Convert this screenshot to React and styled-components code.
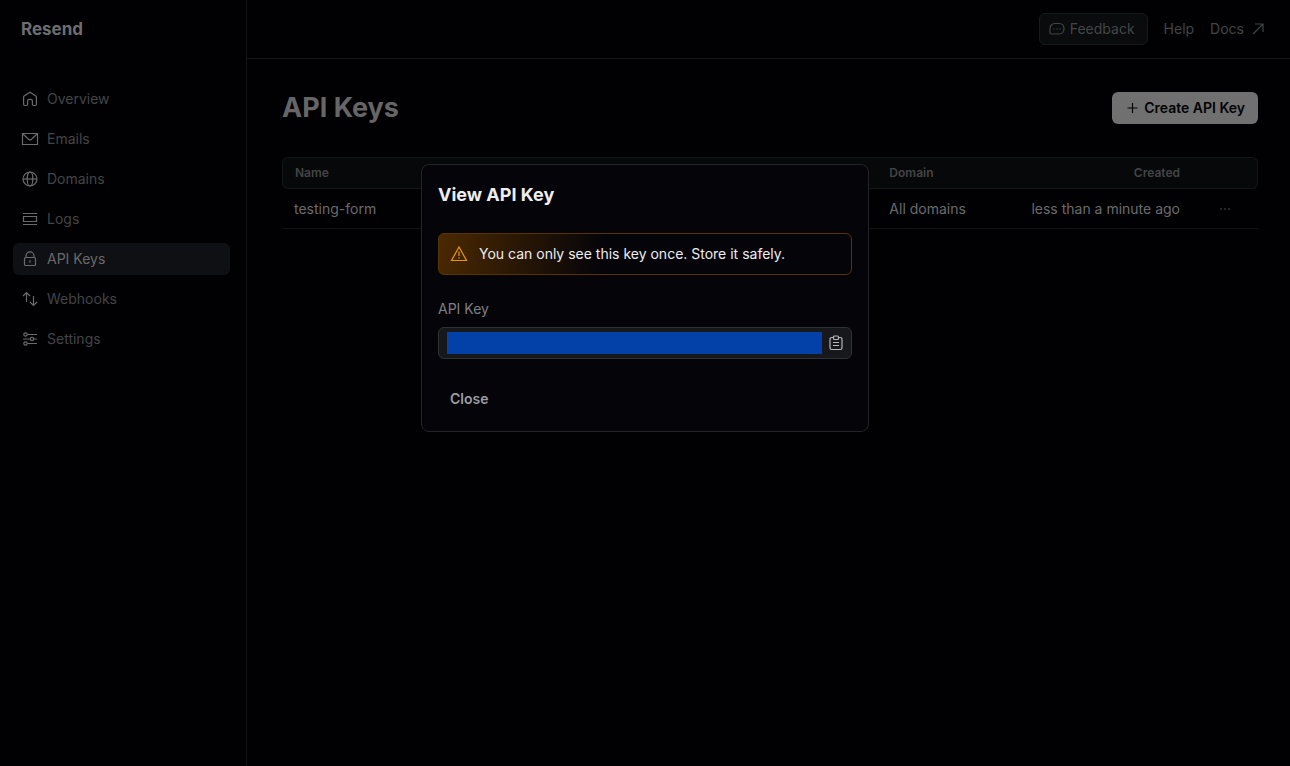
import React from 'react';
import styled, { createGlobalStyle } from 'styled-components';

const GlobalStyle = createGlobalStyle`
  *, *::before, *::after { box-sizing: border-box; }
  body {
    margin: 0;
    background: #010103;
    color: #6a6b6c;
    font: 400 14px/20px Inter, "Liberation Sans", sans-serif;
  }
  button, input { font: inherit; }
  a { color: inherit; text-decoration: none; }
`;

const Page = styled.div`
  display: flex;
  min-height: 100vh;
`;

const Sidebar = styled.aside`
  flex: none;
  width: 247px;
  border-right: 1px solid #131416;
`;

const Logo = styled.a`
  display: flex;
  align-items: center;
  height: 58px;
  padding-left: 21px;
  color: #6e6e6f;
  font-weight: 700;
  font-size: 17px;
  line-height: 24px;
`;

const Nav = styled.nav`
  display: grid;
  gap: 8px;
  padding: 25px 16px 0 13px;
`;

const NavLink = styled.a`
  display: flex;
  align-items: center;
  gap: 8px;
  height: 32px;
  padding: 0 8px;
  border-radius: 6px;
  background: ${(p) => (p.$active ? '#0f1013' : 'transparent')};
  color: ${(p) => (p.$active ? '#69696a' : '#434546')};

  svg { color: #6b6b6c; }
`;

const Icon = styled.svg.attrs({
  fill: 'none',
  stroke: 'currentColor',
  viewBox: '0 0 18 18',
  'aria-hidden': true,
})`
  flex: none;
  width: 18px;
  height: 18px;
  stroke-width: 1.2;
`;

const Main = styled.main`
  flex: 1;
  min-width: 0;
`;

const TopBar = styled.header`
  display: flex;
  align-items: center;
  justify-content: flex-end;
  gap: 16px;
  height: 59px;
  padding-right: 23px;
  border-bottom: 1px solid #131416;
  color: #434546;
`;

const FeedbackButton = styled.button`
  display: flex;
  align-items: center;
  gap: 4px;
  height: 32px;
  padding: 0 12px 0 8px;
  border: 1px solid #17191b;
  border-radius: 6px;
  background: #090b0d;
  color: inherit;
`;

const TopLink = styled.a`
  display: flex;
  align-items: center;
  gap: 5px;
`;

const Content = styled.div`
  padding: 33px 32px 32px 35px;
`;

const TitleRow = styled.div`
  display: flex;
  align-items: center;
  justify-content: space-between;
  margin-bottom: 33px;
`;

const Title = styled.h1`
  margin: 0;
  color: #666667;
  font-weight: 700;
  font-size: 27px;
  line-height: 32px;
`;

const CreateButton = styled.button`
  display: flex;
  align-items: center;
  gap: 3px;
  height: 32px;
  padding: 0 13px 0 11px;
  border: 0;
  border-radius: 6px;
  background: #707070;
  color: #020203;
  font-weight: 600;
`;

const Table = styled.table`
  width: 100%;
  table-layout: fixed;
  border-spacing: 0;
`;

const Head = styled.th`
  width: ${(p) => p.$width};
  height: 32px;
  padding: 0 12px;
  border: 1px solid #131517;
  border-width: 1px 0;
  background: #070809;
  color: #434546;
  font-weight: 600;
  font-size: 12px;
  line-height: 16px;
  text-align: ${(p) => p.$align || 'left'};

  &:first-child { border-left-width: 1px; border-radius: 6px 0 0 6px; }
  &:last-child { border-right-width: 1px; border-radius: 0 6px 6px 0; }
`;

const Cell = styled.td`
  height: 40px;
  padding: 0 12px;
  border-bottom: 1px solid #101214;
  text-align: ${(p) => p.$align || 'left'};
  white-space: nowrap;
`;

const MoreButton = styled.button`
  display: flex;
  margin-left: 12px;
  padding: 0;
  border: 0;
  background: none;
  color: #4b4c4e;
`;

const Overlay = styled.div`
  position: fixed;
  inset: 0;
  display: flex;
  align-items: flex-start;
  justify-content: center;
  padding: 164px 16px 16px;
`;

const Dialog = styled.section`
  width: 100%;
  max-width: 448px;
  padding: 16px;
  border: 1px solid #222428;
  border-radius: 8px;
  background: #050409;
`;

const DialogTitle = styled.h2`
  margin: 0 0 24px;
  color: #edeeef;
  font-weight: 700;
  font-size: 18px;
  line-height: 28px;
`;

const DialogBody = styled.div`
  display: grid;
  gap: 24px;
`;

const Alert = styled.div`
  display: flex;
  align-items: center;
  gap: 11px;
  height: 42px;
  padding: 0 11px;
  border: 1px solid #573401;
  border-radius: 6px;
  background: linear-gradient(98deg, #4b2900 0%, rgba(75, 41, 0, 0) 40%);
  color: #edeeef;

  svg { color: #e9960f; }
`;

const Field = styled.div`
  display: grid;
  gap: 8px;
`;

const Label = styled.label`
  color: #7d8085;
`;

const KeyBox = styled.div`
  display: flex;
  align-items: center;
  gap: 5px;
  height: 32px;
  padding: 0 6px 0 8px;
  border: 1px solid #2e3135;
  border-radius: 6px;
  background: #17181c;
`;

const KeyInput = styled.input`
  flex: 1;
  min-width: 0;
  height: 22px;
  padding: 0;
  border: 0;
  outline: 0;
  background: #0341a8;
`;

const CopyButton = styled.button`
  display: flex;
  padding: 0;
  border: 0;
  background: none;
  color: #b3b5b8;
`;

const CloseButton = styled.button`
  justify-self: start;
  height: 32px;
  padding: 0 12px;
  border: 0;
  border-radius: 6px;
  background: none;
  color: #9c9da1;
  font-weight: 600;
`;

const navItems = [
  { label: 'Overview', icon: <path d="M2.6 7.1c0-.5.2-.9.6-1.2L9 2.3l5.8 3.6c.4.3.6.7.6 1.2v7.2c0 .7-.5 1.2-1.2 1.2h-1.6c-.7 0-1.2-.5-1.2-1.2V11c0-.9-.7-1.6-1.6-1.6H8.200c-.9 0-1.6.7-1.6 1.6v3.3c0 .7-.5 1.2-1.2 1.2H3.8c-.7 0-1.200-.5-1.200-1.200z" /> },
  { label: 'Emails', icon: <path d="M1.5 3.500h15v11h-15zM2 4l5.500 5.200c.9.8 2.100.8 3 0L16 4" /> },
  { label: 'Domains', icon: <><circle cx="9" cy="9" r="7" /><ellipse cx="9" cy="9" rx="2.8" ry="7" /><path d="M2 9h14" /></> },
  { label: 'Logs', icon: <path d="M2 3.5h14M2 14.5h14M2.5 6.5h13v5h-13z" /> },
  { label: 'API Keys', active: true, icon: <><rect x="3.5" y="7.5" width="11" height="8" rx="1.3" /><path d="M5 7.5V5.900a4 4 0 0 1 8 0v1.600M9 10.300v2.500" /></> },
  { label: 'Webhooks', icon: <path d="M5.500 12V3M2 6l3.500-3.500L9 6M12.500 6v9M9 12l3.500 3.500L16 12" /> },
  { label: 'Settings', icon: <><circle cx="4.5" cy="4.5" r="1.7" /><circle cx="11" cy="9" r="1.7" /><circle cx="4.5" cy="13.5" r="1.7" /><path d="M6.200 4.500H16M2 9h7.300M12.700 9H16M6.200 13.500H16" /></> },
];

export default function App() {
  return (
    <>
      <GlobalStyle />
      <Page>
        <Sidebar>
          <Logo href="#">Resend</Logo>
          <Nav aria-label="Main">
            {navItems.map((item) => (
              <NavLink href="#" key={item.label} $active={item.active} aria-current={item.active ? 'page' : undefined}>
                <Icon>{item.icon}</Icon>
                {item.label}
              </NavLink>
            ))}
          </Nav>
        </Sidebar>
        <Main>
          <TopBar>
            <FeedbackButton type="button">
              <Icon>
                <path d="M2 8.700c0-2.900 1.900-5.200 4.800-5.200h4.400c2.900 0 4.800 2.300 4.800 5.200s-1.900 5.300-4.800 5.300H3.200c-.7 0-1.200-.5-1.200-1.200z" />
                <path d="M5.300 9h1.400M8.300 9h1.400M11.300 9h1.400" />
              </Icon>
              Feedback
            </FeedbackButton>
            <TopLink href="#">Help</TopLink>
            <TopLink href="#">
              Docs
              <Icon><path d="M4 14L14 4M6 4h8v8" /></Icon>
            </TopLink>
          </TopBar>
          <Content>
            <TitleRow>
              <Title>API Keys</Title>
              <CreateButton type="button">
                <Icon><path d="M9.500 4v10M4.500 9h10" /></Icon>
                Create API Key
              </CreateButton>
            </TitleRow>
            <Table>
              <thead>
                <tr>
                  <Head $width="61%">Name</Head>
                  <Head>Domain</Head>
                  <Head $width="180px" $align="right">Created</Head>
                  <Head $width="66px" aria-label="Actions" />
                </tr>
              </thead>
              <tbody>
                <tr>
                  <Cell>testing-form</Cell>
                  <Cell>All domains</Cell>
                  <Cell $align="right">less than a minute ago</Cell>
                  <Cell>
                    <MoreButton type="button" aria-label="More options">
                      <Icon><path d="M4 9h2M8 9h2M12 9h2" /></Icon>
                    </MoreButton>
                  </Cell>
                </tr>
              </tbody>
            </Table>
          </Content>
        </Main>
      </Page>
      <Overlay>
        <Dialog role="dialog" aria-modal="true" aria-labelledby="dialog-title">
          <DialogTitle id="dialog-title">View API Key</DialogTitle>
          <DialogBody>
            <Alert>
              <Icon><path d="M9 2L16.500 15.500h-15zM9 6.500v4.500M9 12.200v1.300" /></Icon>
              You can only see this key once. Store it safely.
            </Alert>
            <Field>
              <Label htmlFor="api-key">API Key</Label>
              <KeyBox>
                <KeyInput id="api-key" readOnly value="" />
                <CopyButton type="button" aria-label="Copy API key">
                  <Icon strokeWidth="1.5">
                    <path d="M6.500 3.500H4.700c-1 0-1.700.7-1.700 1.700v8.600c0 1 .7 1.700 1.700 1.700h8.600c1 0 1.700-.7 1.700-1.700V5.200c0-1-.7-1.700-1.700-1.700h-1.800M6 8.500h6M6 11.500h6" />
                    <rect x="6.5" y="2" width="5" height="3.5" rx="1" />
                  </Icon>
                </CopyButton>
              </KeyBox>
            </Field>
            <CloseButton type="button">Close</CloseButton>
          </DialogBody>
        </Dialog>
      </Overlay>
    </>
  );
}
